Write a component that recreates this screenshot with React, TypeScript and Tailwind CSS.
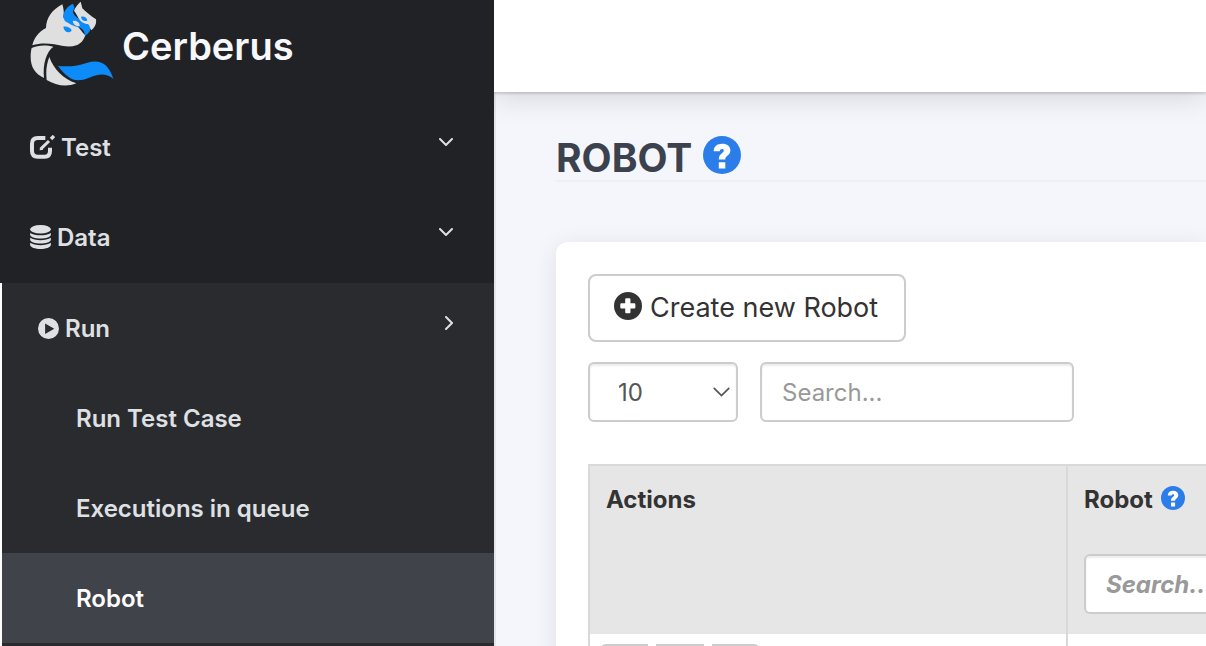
import React from "react";

type IconProps = { className?: string };

const Logo = ({ className }: IconProps) => (
  <svg viewBox="0 0 252 252" className={className} aria-hidden="true">
    <g transform="translate(-31 -6)">
      <path
        fill="#dfdfe0"
        d="M38 136C42 115 57 95 79 84C80 54 96 30 128 13C132 25 134 40 131 52C142 60 158 66 170 76C181 86 187 97 197 106C192 121 183 132 170 136C150 143 128 138 104 133C80 129 57 130 38 136Z"
      />
      <path
        fill="#0d8bf9"
        d="M130 50C133 32 143 18 160 11L165 25C157 33 160 43 171 52C182 60 190 70 213 73C215 90 207 102 196 107C195 93 188 84 174 81C156 78 145 68 136 64Z"
      />
      <path
        fill="#dfdfe0"
        d="M163 32C168 20 176 11 183 5L188 25C197 35 212 47 229 58C231 71 226 81 215 91C210 85 212 78 205 72C192 72 184 65 178 57C173 48 168 38 163 32Z"
      />
      <path fill="#dfdfe0" d="M159 63C171 60 181 68 180 78C169 80 161 75 159 63Z" />
      <path fill="#0d8bf9" d="M184 50C194 48 202 53 203 62C193 66 185 60 184 50Z" />
      <path fill="#0d8bf9" d="M131 80C144 78 153 84 156 91C150 102 133 98 131 80Z" />
      <path
        fill="#dfdfe0"
        d="M36 144C53 135 80 134 101 140C80 156 69 190 73 234C47 222 33 202 33 171C33 160 34 151 36 144Z"
      />
      <path
        fill="#dfdfe0"
        d="M89 171C102 207 130 237 170 250C141 262 109 257 81 240C78 213 81 190 89 171Z"
      />
      <path
        fill="#0d8bf9"
        d="M115 198C151 201 178 197 203 188C242 178 266 191 281 236C259 219 238 221 214 231C190 242 164 246 148 232C134 222 125 211 115 198Z"
      />
    </g>
  </svg>
);

const EditIcon = ({ className }: IconProps) => (
  <svg viewBox="0 0 75 72" className={className} fill="none" stroke="currentColor" aria-hidden="true">
    <path strokeWidth="12" d="M46 9H23Q6 9 6 26V48Q6 65 23 65H44Q60 65 60 48V38" />
    <path strokeWidth="9" d="M34 40L57 18" />
    <path strokeWidth="10" d="M63 12L72 3" />
    <path fill="currentColor" stroke="none" d="M29 46L30 36L40 44Z" />
  </svg>
);

const DatabaseIcon = ({ className }: IconProps) => (
  <svg viewBox="0 0 63 73" className={className} fill="currentColor" aria-hidden="true">
    <ellipse cx="31.5" cy="13" rx="31.5" ry="13" />
    <path d="M0 24C14 34 49 34 63 24V30C63 45 0 45 0 30Z" />
    <path d="M0 39C14 49 49 49 63 39V45C63 60 0 60 0 45Z" />
    <path d="M0 54C14 64 49 64 63 54V60C63 77 0 77 0 60Z" />
  </svg>
);

const PlayIcon = ({ className }: IconProps) => (
  <svg viewBox="0 0 62 62" className={className} fill="currentColor" aria-hidden="true">
    <path fillRule="evenodd" d="M31 0A31 31 0 1 1 31 62A31 31 0 1 1 31 0ZM21 16V47L48 31.5Z" />
  </svg>
);

const QuestionIcon = ({ className }: IconProps) => (
  <svg viewBox="0 0 38 38" className={className} aria-hidden="true">
    <circle cx="19" cy="19" r="19" fill="#2b7de9" />
    <path
      fill="#fff"
      d="M10.7 15.2C10.8 10.4 14 7.7 19.2 7.7C24.2 7.7 27.4 10.3 27.4 14.3C27.4 17.3 25.8 18.8 24.1 20C22.8 21 22.3 21.7 22.3 23.5H15.8C15.7 20.3 16.9 18.8 18.7 17.4C20 16.4 20.8 15.8 20.8 14.6C20.8 13.5 20.1 12.9 19.1 12.9C17.7 12.9 16.9 13.7 16.8 15.2ZM15.8 26.2H22.3V32.4H15.8Z"
    />
  </svg>
);

const PlusIcon = ({ className }: IconProps) => (
  <svg viewBox="0 0 80 80" className={className} fill="currentColor" aria-hidden="true">
    <path
      fillRule="evenodd"
      d="M40 0A40 40 0 1 1 40 80A40 40 0 1 1 40 0ZM35 18Q32 18 32 21V32H21Q18 32 18 35V44Q18 47 21 47H32V58Q32 61 35 61H44Q47 61 47 58V47H58Q61 47 61 44V35Q61 32 58 32H47V21Q47 18 44 18Z"
    />
  </svg>
);

const Chevron = ({ className }: IconProps) => (
  <svg viewBox="0 0 14 8" className={className} fill="none" stroke="currentColor" strokeLinecap="round" aria-hidden="true">
    <path d="M1 1L7 7L13 1" />
  </svg>
);

const menu = [
  { label: "Test", Icon: EditIcon, icon: "mb-0.5 h-6 w-[25px]" },
  { label: "Data", Icon: DatabaseIcon, icon: "mb-0.5 h-6 w-[21px]" },
];

const runItems = [
  { label: "Run Test Case", active: false },
  { label: "Executions in queue", active: false },
  { label: "Robot", active: true },
];

const field =
  "h-[60px] rounded-md border-2 border-[#ccc] bg-white px-5 text-2xl text-[#555] shadow-[inset_0_2px_2px_rgba(0,0,0,0.075)] placeholder:text-[#999]";

function Sidebar() {
  return (
    <aside className="flex w-[494px] shrink-0 flex-col bg-[#212226] text-2xl font-semibold text-[#dfe0e3]">
      <a href="#home" className="flex h-[103px] shrink-0 items-start pl-[30px]">
        <Logo className="mt-0.5 size-[84px] shrink-0" />
        <span className="ml-2 mt-[22px] text-[38px] leading-12 text-[#f7f8fb]">Cerberus</span>
      </a>
      <nav className="flex flex-col">
        {menu.map(({ label, Icon, icon }) => (
          <button key={label} className="flex h-[90px] items-center gap-1.5 pl-[30px] pr-[41px]">
            <Icon className={icon} />
            <span>{label}</span>
            <Chevron className="mb-3 ml-auto h-2 w-3.5 stroke-2" />
          </button>
        ))}
        <div className="border-l-2 border-white bg-[#2a2b2f]">
          <button className="flex h-[90px] w-full items-center gap-1.5 pl-9 pr-[38px] pt-0.5">
            <PlayIcon className="mb-0.5 size-[21px]" />
            <span>Run</span>
            <Chevron className="mb-3 ml-auto h-2 w-3.5 -rotate-90 stroke-2" />
          </button>
          {runItems.map(({ label, active }) => (
            <a
              key={label}
              href={`#${label}`}
              className={`flex h-[90px] items-center pl-[74px] pt-0.5 ${active ? "bg-[#41434a] text-white" : ""}`}
            >
              {label}
            </a>
          ))}
          <div className="h-[90px]" />
        </div>
      </nav>
    </aside>
  );
}

export default function App() {
  return (
    <div className="flex h-screen overflow-hidden bg-[#f5f6fb] font-['Inter','Liberation_Sans',sans-serif]">
      <Sidebar />
      <div className="flex min-w-0 flex-1 flex-col overflow-hidden">
        <header className="z-10 h-[92px] shrink-0 bg-white shadow-[0_2px_2px_rgba(0,0,0,0.14),0_6px_28px_rgba(0,0,0,0.13)]" />
        <main className="min-h-0 flex-1 overflow-hidden border-l-2 border-[#e5e6eb] pl-[60px] pt-11">
          <h1 className="flex items-center gap-[11px] border-b-2 border-[#eeeff3] text-[39px] font-bold leading-[44px] text-[#3b424e]">
            ROBOT
            <a href="#help" aria-label="Help about robots">
              <QuestionIcon className="mb-1.5 size-[38px]" />
            </a>
          </h1>
          <section className="mt-[60px] overflow-hidden rounded-l-xl bg-white p-8 pr-0 shadow-[0_4px_24px_rgba(0,0,0,0.09)]">
            <button className="flex h-[68px] items-center gap-2 rounded-lg border-2 border-[#ccc] pl-6 pr-[26px] text-[27px] text-[#333]">
              <PlusIcon className="mb-1 size-7" />
              Create new Robot
            </button>
            <div className="mt-5 flex gap-[22px]">
              <div className="relative w-[150px]">
                <select aria-label="Rows per page" defaultValue="10" className={`${field} w-full appearance-none pl-7 pt-0.5`}>
                  <option>10</option>
                  <option>25</option>
                  <option>50</option>
                </select>
                <Chevron className="pointer-events-none absolute right-2 top-[25px] h-2.5 w-[17px] stroke-[1.4] text-[#555]" />
              </div>
              <input aria-label="Search" placeholder="Search..." className={`${field} w-[314px]`} />
            </div>
            <table className="mt-[42px] w-[1000px] table-fixed border-collapse text-left text-2xl text-[#333]">
              <thead className="bg-[#e6e6e6]">
                <tr className="h-[169px] align-top">
                  <th className="w-[478px] border-2 border-b-0 border-[#d9d9d9] px-4 pt-[18px] font-bold">Actions</th>
                  <th className="border-2 border-b-0 border-[#d9d9d9] px-4 pt-[18px] font-bold">
                    <div className="flex items-center gap-2">
                      Robot
                      <a href="#help-name" aria-label="Help about the robot name">
                        <QuestionIcon className="mb-1 size-6" />
                      </a>
                    </div>
                    <input aria-label="Search robot" placeholder="Search..." className={`${field} mt-[38px] w-full font-bold italic`} />
                  </th>
                </tr>
              </thead>
              <tbody>
                <tr className="h-20 align-top">
                  <td className="border-2 border-t-0 border-[#d9d9d9] px-2.5 pt-2.5">
                    <div className="flex gap-2">
                      <button aria-label="Edit" className="h-11 w-12 rounded-l-md border-2 border-[#ccc]" />
                      <button aria-label="Duplicate" className="h-11 w-12 border-2 border-[#ccc]" />
                      <button aria-label="Delete" className="h-11 w-12 rounded-r-md border-2 border-[#ccc]" />
                    </div>
                  </td>
                  <td className="border-2 border-t-0 border-[#d9d9d9]" />
                </tr>
              </tbody>
            </table>
          </section>
        </main>
      </div>
    </div>
  );
}
